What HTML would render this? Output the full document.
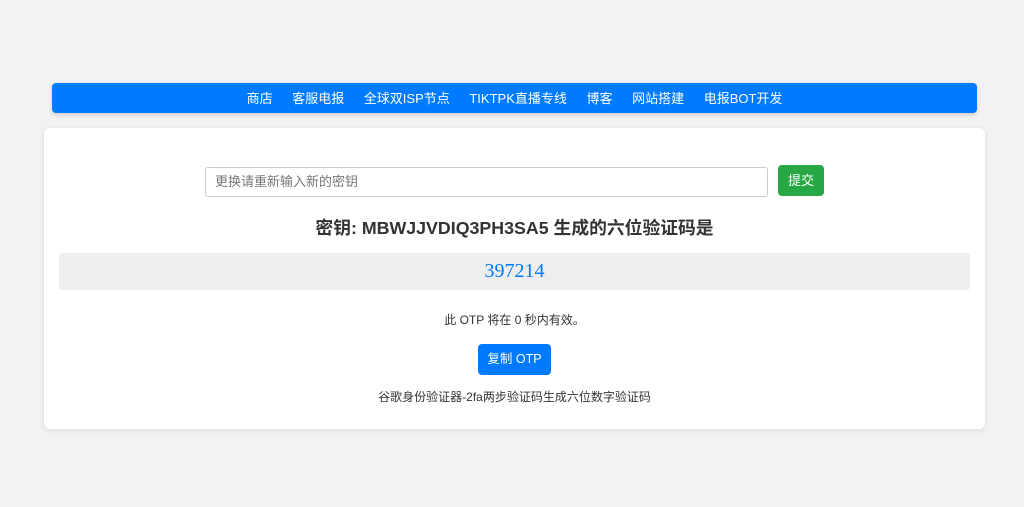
<!DOCTYPE html>
<html><head><meta charset="utf-8"><style>
*{box-sizing:border-box;margin:0;padding:0}
body{width:1024px;height:507px;background:#f2f2f2;font-family:"Liberation Sans","Noto Sans CJK SC",sans-serif;color:#333;position:relative;overflow:hidden}
.nav{position:absolute;left:52px;top:83px;width:925px;height:30px;background:#007bff;border-radius:4px;box-shadow:0 2px 4px rgba(0,0,0,.15);text-align:center;font-size:13px;color:#fff;line-height:32px}
.nav span{margin:0 9.8px}
.card{position:absolute;left:44px;top:128px;width:941px;height:301px;background:#fff;border-radius:6px;box-shadow:0 1px 6px rgba(0,0,0,.1)}
.inp{position:absolute;left:161px;top:39px;width:563px;height:30px;border:1px solid #ccc;border-radius:3px;font-size:13px;color:#777;line-height:28px;padding-left:9px}
.btn{position:absolute;left:734px;top:37px;width:46px;height:31px;background:#28a745;border-radius:4px;color:#fff;font-size:13px;text-align:center;line-height:32px}
h2{position:absolute;left:0;width:100%;top:86px;text-align:center;font-size:17.8px;font-weight:bold;color:#333}
.otp{position:absolute;left:15px;top:125px;width:911px;height:37px;background:#eee;border-radius:3px;text-align:center;font-family:"Liberation Serif","Noto Serif CJK SC",serif;font-size:20px;color:#007bff;line-height:37px}
.t1{position:absolute;width:100%;top:183px;text-align:center;font-size:12px}
.cp{position:absolute;left:434px;top:216px;width:73px;height:31px;background:#007bff;border-radius:4px;color:#fff;font-size:12.5px;text-align:center;line-height:31px}
.t2{position:absolute;width:100%;top:260px;text-align:center;font-size:12px}
</style></head><body>
<div class="nav"><span>商店</span><span>客服电报</span><span>全球双ISP节点</span><span>TIKTPK直播专线</span><span>博客</span><span>网站搭建</span><span>电报BOT开发</span></div>
<div class="card">
<div class="inp">更换请重新输入新的密钥</div>
<div class="btn">提交</div>
<h2>密钥: MBWJJVDIQ3PH3SA5 生成的六位验证码是</h2>
<div class="otp">397214</div>
<div class="t1">此 OTP 将在 0 秒内有效。</div>
<div class="cp">复制 OTP</div>
<div class="t2">谷歌身份验证器-2fa两步验证码生成六位数字验证码</div>
</div>
</body></html>
